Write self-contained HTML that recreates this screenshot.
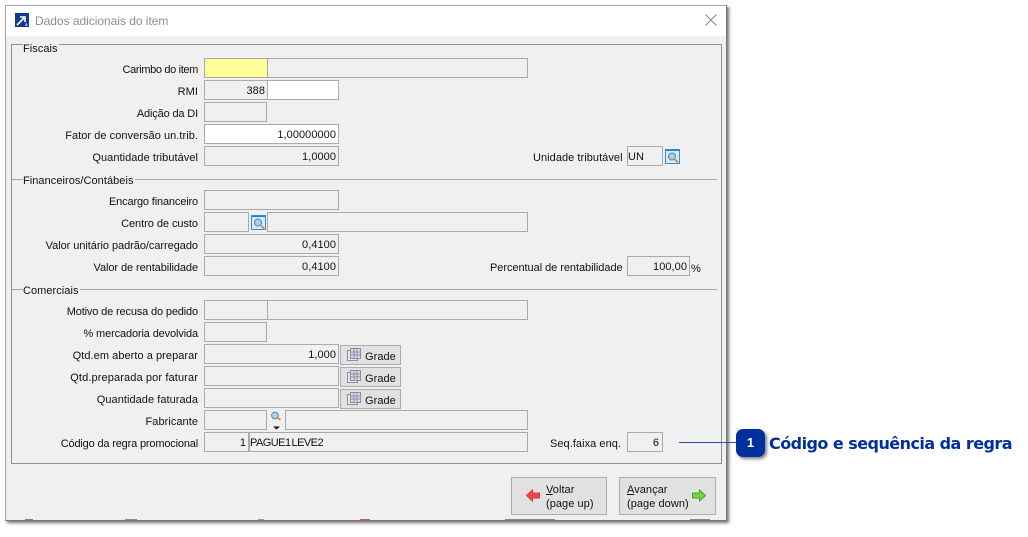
<!DOCTYPE html>
<html lang="pt"><head><meta charset="utf-8"><title>Dados adicionais do item</title>
<style>
html,body{margin:0;padding:0;background:#fff}
#r{position:relative;width:1028px;height:537px;overflow:hidden;background:#fff;font:11px "Liberation Sans",sans-serif;color:#111}
#r div,#r span.a,#r svg{position:absolute}
.w{left:5px;top:5px;width:722px;height:516px;background:#f0f0f0;border:1px solid #a8a8a8;border-bottom-color:#777;border-right-color:#777;box-sizing:border-box;box-shadow:2px 2px 3px rgba(0,0,0,.55)}
.t{left:6px;top:6px;width:720px;height:30px;background:#fff}
.f{box-sizing:border-box;border:1px solid #aaa;height:20px;background:#f0f0f0;line-height:20px;text-align:right;padding-right:2px;white-space:nowrap;letter-spacing:.05px}
.l{right:830px;text-align:right;white-space:nowrap;line-height:14px;letter-spacing:.05px}
.g{white-space:nowrap;line-height:14px;letter-spacing:.05px}
.h{height:1px;background:#a6a6a6;left:12px;width:705px}
.b{box-sizing:border-box;left:340px;width:61px;height:20px;background:#e1e1e1;border:1px solid #adadad;line-height:22px;padding-left:24px;letter-spacing:.05px}
.p{box-sizing:border-box;top:477px;height:38px;background:#e1e1e1;border:1px solid #adadad;line-height:14px;white-space:nowrap}
.k{height:1px;top:519px;background:#888}
</style></head><body><div id="r">
<div class="w"></div><div class="t"></div>
<div class="k" style="left:25px;width:8px;background:#5a9a5a"></div>
<div class="k" style="left:125px;width:12px;background:#7a9a6c"></div>
<div class="k" style="left:258px;width:6px;background:#c09060"></div>
<div class="k" style="left:360px;width:10px;background:#c06060"></div>
<div class="k" style="left:505px;width:50px"></div>
<div class="k" style="left:690px;width:20px"></div>
<svg style="left:15px;top:13px" width="14" height="14" viewBox="0 0 14 14"><rect width="14" height="14" fill="#123a8c"/><path d="M2 12 9 5M5 4h5v5" stroke="#fff" stroke-width="1.6" fill="none"/><path d="M10 13l1-4 2 4z" fill="#9db4dc"/></svg>
<div class="g" style="left:35px;top:14px;font-size:12px;color:#8c8c8c;letter-spacing:-.03px">Dados adicionais do item</div>
<svg style="left:705px;top:14px" width="12" height="12" viewBox="0 0 12 12"><path d="M.5.5l11 11M11.5.5l-11 11" stroke="#8a8a8a" stroke-width="1"/></svg>

<div style="left:11px;top:44px;width:711px;height:420px;box-sizing:border-box;border:1px solid #8f8f8f"></div>
<div class="g" style="left:23px;top:42px;background:#f0f0f0;padding-right:1px">Fiscais</div>
<div class="h" style="top:179px"></div>
<div class="g" style="left:23px;top:174px;background:#f0f0f0;padding-right:1px">Financeiros/Contábeis</div>
<div class="h" style="top:289px"></div>
<div class="g" style="left:23px;top:284px;background:#f0f0f0;padding-right:1px">Comerciais</div>

<div class="l" style="top:63px;letter-spacing:-.35px">Carimbo do item</div>
<div class="f" style="left:204px;top:58px;width:64px;background:#ffff99"></div>
<div class="f" style="left:267px;top:58px;width:261px"></div>
<div class="l" style="top:85px">RMI</div>
<div class="f" style="left:204px;top:80px;width:64px">388</div>
<div class="f" style="left:267px;top:80px;width:72px;background:#fff"></div>
<div class="l" style="top:107px;letter-spacing:-.15px">Adição da DI</div>
<div class="f" style="left:204px;top:102px;width:63px"></div>
<div class="l" style="top:129px">Fator de conversão un.trib.</div>
<div class="f" style="left:204px;top:124px;width:135px;background:#fff">1,00000000</div>
<div class="l" style="top:151px">Quantidade tributável</div>
<div class="f" style="left:204px;top:146px;width:135px">1,0000</div>
<div class="g" style="left:533px;top:151px">Unidade tributável</div>
<div class="f" style="left:627px;top:146px;width:36px;text-align:left;padding-left:0">UN</div>
<svg style="left:665px;top:149px" width="15" height="15" viewBox="0 0 15 15"><rect x=".5" y=".5" width="14" height="14" fill="#d9ecfb" stroke="#1e90ff"/><rect x="1" y="1" width="13" height="1" fill="#1e7fd8"/><circle cx="7" cy="7.500" r="3.500" fill="#a9d3ea" stroke="#6f8394" stroke-width="1.100"/><path d="M10 10.500l3 3" stroke="#f08a24" stroke-width="2"/></svg>

<div class="l" style="top:195px;letter-spacing:-.15px">Encargo financeiro</div>
<div class="f" style="left:204px;top:190px;width:135px"></div>
<div class="l" style="top:217px;letter-spacing:-.05px">Centro de custo</div>
<div class="f" style="left:204px;top:212px;width:45px"></div>
<svg style="left:251px;top:215px" width="15" height="15" viewBox="0 0 15 15"><rect x=".5" y=".5" width="14" height="14" fill="#d9ecfb" stroke="#1e90ff"/><rect x="1" y="1" width="13" height="1" fill="#1e7fd8"/><circle cx="7" cy="7.500" r="3.500" fill="#a9d3ea" stroke="#6f8394" stroke-width="1.100"/><path d="M10 10.500l3 3" stroke="#f08a24" stroke-width="2"/></svg>
<div class="f" style="left:267px;top:212px;width:261px"></div>
<div class="l" style="top:239px;letter-spacing:-.05px">Valor unitário padrão/carregado</div>
<div class="f" style="left:204px;top:234px;width:135px">0,4100</div>
<div class="l" style="top:261px;letter-spacing:-.08px">Valor de rentabilidade</div>
<div class="f" style="left:204px;top:256px;width:135px">0,4100</div>
<div class="g" style="left:490px;top:261px;letter-spacing:-.05px">Percentual de rentabilidade</div>
<div class="f" style="left:627px;top:256px;width:63px">100,00</div>
<div class="g" style="left:691px;top:262px">%</div>

<div class="l" style="top:305px;letter-spacing:-.15px">Motivo de recusa do pedido</div>
<div class="f" style="left:204px;top:300px;width:64px"></div>
<div class="f" style="left:267px;top:300px;width:261px"></div>
<div class="l" style="top:327px;letter-spacing:-.13px">% mercadoria devolvida</div>
<div class="f" style="left:204px;top:322px;width:63px"></div>
<div class="l" style="top:349px">Qtd.em aberto a preparar</div>
<div class="f" style="left:204px;top:344px;width:135px">1,000</div>
<div class="b" style="top:345px">Grade</div>
<div class="l" style="top:371px;letter-spacing:.12px">Qtd.preparada por faturar</div>
<div class="f" style="left:204px;top:366px;width:135px"></div>
<div class="b" style="top:367px">Grade</div>
<div class="l" style="top:393px">Quantidade faturada</div>
<div class="f" style="left:204px;top:388px;width:135px"></div>
<div class="b" style="top:389px">Grade</div>
<svg style="left:347px;top:348px" width="14" height="13" viewBox="0 0 14 13"><rect x=".5" y="2.500" width="10" height="10" fill="#e6e6f5" stroke="#8d8d9c"/><rect x="3.500" y=".5" width="10" height="10" fill="#dcdcf0" stroke="#8d8d9c"/><path d="M7 .5v10M10 .5v10M3.500 4h10M3.500 7h10" stroke="#8d8d9c"/></svg>
<svg style="left:347px;top:370px" width="14" height="13" viewBox="0 0 14 13"><rect x=".5" y="2.500" width="10" height="10" fill="#e6e6f5" stroke="#8d8d9c"/><rect x="3.500" y=".5" width="10" height="10" fill="#dcdcf0" stroke="#8d8d9c"/><path d="M7 .5v10M10 .5v10M3.500 4h10M3.500 7h10" stroke="#8d8d9c"/></svg>
<svg style="left:347px;top:392px" width="14" height="13" viewBox="0 0 14 13"><rect x=".5" y="2.500" width="10" height="10" fill="#e6e6f5" stroke="#8d8d9c"/><rect x="3.500" y=".5" width="10" height="10" fill="#dcdcf0" stroke="#8d8d9c"/><path d="M7 .5v10M10 .5v10M3.500 4h10M3.500 7h10" stroke="#8d8d9c"/></svg>
<div class="l" style="top:415px">Fabricante</div>
<div class="f" style="left:204px;top:410px;width:63px"></div>
<svg style="left:270px;top:411px" width="12" height="20" viewBox="0 0 12 20"><circle cx="5" cy="4.500" r="3.400" fill="#a9d3ea" stroke="#6f8394"/><path d="M8 7l2.500 2" stroke="#f08a24" stroke-width="2"/><path d="M3 15.500h7l-3.500 3z" fill="#111"/></svg>
<div class="f" style="left:285px;top:410px;width:243px"></div>
<div class="l" style="top:437px;letter-spacing:-.17px">Código da regra promocional</div>
<div class="f" style="left:204px;top:432px;width:45px">1</div>
<div class="f" style="left:249px;top:432px;width:279px;text-align:left;padding-left:0;letter-spacing:-.55px;word-spacing:-1.5px">PAGUE1 LEVE2</div>
<div class="g" style="left:550px;top:437px">Seq.faixa enq.</div>
<div class="f" style="left:627px;top:432px;width:36px;padding-right:3px">6</div>

<div class="p" style="left:511px;width:96px"></div>
<div class="g" style="left:546px;top:483px;line-height:14px"><u>V</u>oltar<br>(page up)</div>
<svg style="left:526px;top:489px" width="14" height="13" viewBox="0 0 14 13"><path d="M.5 6.500 6.500 1v3H13.500v5H6.500v3z" fill="#f4474b" stroke="#d93a3a"/></svg>
<div class="p" style="left:619px;width:97px"></div>
<div class="g" style="left:627px;top:483px;line-height:14px"><u>A</u>vançar<br>(page down)</div>
<svg style="left:692px;top:489px" width="14" height="13" viewBox="0 0 14 13"><path d="M13.500 6.500 7.500 1v3H.5v5h7v3z" fill="#6fd44a" stroke="#4aa32f"/></svg>

<div style="left:679px;top:442px;width:58px;height:1px;background:#2b4f9e"></div>
<div style="left:736px;top:429px;width:29px;height:28px;border-radius:7px;background:#00309c;box-shadow:2px 2px 3px rgba(0,0,0,.5);color:#fff;font:bold 13px/28px 'Liberation Sans',sans-serif;text-align:center">1</div>
<div class="g" style="left:769px;top:433px;font:bold 16px/22px 'DejaVu Sans',sans-serif;color:#00309c;letter-spacing:-.54px">Código e sequência da regra</div>
</div></body></html>
